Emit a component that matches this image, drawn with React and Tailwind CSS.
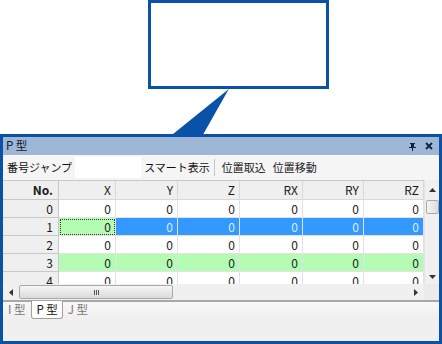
import React from 'react';

const columns = [
  { key: 'X', w: 'w-[57px]' },
  { key: 'Y', w: 'w-[62px]' },
  { key: 'Z', w: 'w-[62px]' },
  { key: 'RX', w: 'w-[63px]' },
  { key: 'RY', w: 'w-[61px]' },
  { key: 'RZ', w: 'w-[60px]' },
];

const rows = [0, 1, 2, 3, 4];

const cellColor = (row, col) => {
  if (row === 1 && col === 0) return 'bg-[#b4fcb4] text-[#222] outline-1 outline-dotted outline-[#333] -outline-offset-2';
  if (row === 1) return 'bg-[#3399ff] text-[#dbeeff]';
  if (row === 3) return 'bg-[#b4fcb4] text-[#222]';
  return 'bg-white text-[#222]';
};

const PinIcon = () => (
  <svg width="8" height="9" viewBox="0 0 8 9" className="text-[#10223f]">
    <path d="M1 1h5v1H5v3h2v1H4v3H3V6H0V5h2V2H1z" fill="currentColor" />
  </svg>
);

const CloseIcon = () => (
  <svg width="8" height="8" viewBox="0 0 8 8">
    <path d="M1 1l6 6M7 1L1 7" stroke="#10223f" strokeWidth="1.8" />
  </svg>
);

const TitleBar = () => (
  <div className="h-[18px] bg-[#9eb7d5] flex items-center pl-[3px] pr-[6px] text-[11.5px] text-[#0e1a33]">
    <span>P 型</span>
    <div className="ml-auto flex items-center gap-[8px]">
      <PinIcon />
      <CloseIcon />
    </div>
  </div>
);

const Toolbar = () => (
  <div className="h-[25px] bg-[#f5f5f5] flex items-center text-[11px] text-[#111] pl-[4px]">
    <span>番号ジャンプ</span>
    <div className="w-[66px] h-[21px] bg-white ml-[3px]" />
    <span className="ml-[3px]">スマート表示</span>
    <div className="w-px h-[17px] bg-[#c4c4c4] ml-[4px]" />
    <span className="ml-[7px] text-[#222]">位置取込</span>
    <span className="ml-[7px] text-[#222]">位置移動</span>
  </div>
);

const HeaderRow = () => (
  <div className="flex h-[20px] border-t border-[#c8c8c8] bg-[#efefef] text-[12px] text-[#1a1a1a]">
    <div className="w-[56px] flex items-center justify-end pr-[5px] font-bold border-r border-b border-[#c8c8c8]">No.</div>
    {columns.map((c) => (
      <div key={c.key} className={`${c.w} flex items-center justify-end pr-[4px] border-r border-b border-[#d8d8d8]`}>
        {c.key}
      </div>
    ))}
  </div>
);

const DataRow = ({ n }) => (
  <div className="flex h-[18px] shrink-0 text-[12px]">
    <div className="w-[56px] flex items-center justify-end pr-[5px] bg-[#efefef] text-[#1a1a1a] border-r border-b border-[#c8c8c8]">
      {n}
    </div>
    {columns.map((c, i) => (
      <div
        key={c.key}
        className={`${c.w} ${cellColor(n, i)} flex items-center justify-end pr-[4px] border-r border-b border-[#e2e2e2]`}
      >
        0
      </div>
    ))}
  </div>
);

const VScroll = () => (
  <div className="w-[15px] bg-[#f0f0f0] flex flex-col items-center border-l border-[#e4e4e4]">
    <div className="h-[20px] flex items-center justify-center">
      <svg width="7" height="4" viewBox="0 0 7 4"><path d="M0 4L3.5 0 7 4z" fill="#333" /></svg>
    </div>
    <div className="w-[13px] h-[14px] rounded-[2px] border border-[#a9a9a9] bg-gradient-to-r from-[#f4f4f4] to-[#dcdcdc]" />
    <div className="flex-1" />
    <div className="h-[14px] flex items-center justify-center">
      <svg width="7" height="4" viewBox="0 0 7 4"><path d="M0 0L3.5 4 7 0z" fill="#333" /></svg>
    </div>
  </div>
);

const HScroll = () => (
  <div className="h-[16px] flex bg-[#f0f0f0]">
    <div className="w-[421px] flex items-center">
      <div className="w-[16px] flex items-center justify-center">
        <svg width="4" height="7" viewBox="0 0 4 7"><path d="M4 0L0 3.5 4 7z" fill="#333" /></svg>
      </div>
      <div className="w-[154px] h-[14px] rounded-[2px] border border-[#a9a9a9] bg-gradient-to-b from-[#f6f6f6] to-[#dadada] flex items-center justify-center">
        <div className="flex gap-[1px]">
          <div className="w-px h-[5px] bg-[#555]" />
          <div className="w-px h-[5px] bg-[#555]" />
          <div className="w-px h-[5px] bg-[#555]" />
        </div>
      </div>
      <div className="flex-1" />
      <div className="w-[16px] flex items-center justify-center">
        <svg width="4" height="7" viewBox="0 0 4 7"><path d="M0 0L4 3.5 0 7z" fill="#333" /></svg>
      </div>
    </div>
    <div className="w-[15px] bg-[#ebebeb]" />
  </div>
);

const Tabs = () => (
  <div className="flex-1 bg-[#f0f0f0] flex flex-col">
    <div className="h-[2px] border-t border-b border-[#a8a8a8] bg-[#dcdcdc]" />
    <div className="h-[18px] flex items-start text-[11.5px] bg-gradient-to-b from-[#f8f8f8] to-[#efefef]">
      <div className="pl-[5px] pr-[6px] h-[16px] flex items-center text-[#777]">I 型</div>
      <div className="px-[4px] h-[18px] -mt-[1px] flex items-center bg-white text-[#111] border-x border-b border-[#a0a0a0] rounded-b-[3px]">
        P 型
      </div>
      <div className="pl-[5px] h-[16px] flex items-center text-[#777]">J 型</div>
    </div>
  </div>
);

const App = () => {
  return (
    <div className="w-[442px] h-[344px] bg-white overflow-hidden" style={{ fontFamily: '"Noto Sans CJK JP", "Liberation Sans", sans-serif' }}>
      <div className="h-[134px]">
        <div className="ml-[148px] w-[181px] h-[89px] border-[3px] border-[#0a52a8] bg-white" />
        <svg width="442" height="45" viewBox="0 88 442 46" className="block">
          <path d="M229 88L172 134H203z" fill="#0a52a8" />
        </svg>
      </div>
      <div className="h-[210px] border-[3px] border-[#0a52a8] bg-[#f0f0f0] flex flex-col">
        <TitleBar />
        <Toolbar />
        <div className="flex h-[104px] bg-white">
          <div className="w-[421px] flex flex-col overflow-hidden">
            <HeaderRow />
            {rows.map((n) => (
              <DataRow key={n} n={n} />
            ))}
          </div>
          <VScroll />
        </div>
        <HScroll />
        <Tabs />
      </div>
    </div>
  );
};

export default App;
